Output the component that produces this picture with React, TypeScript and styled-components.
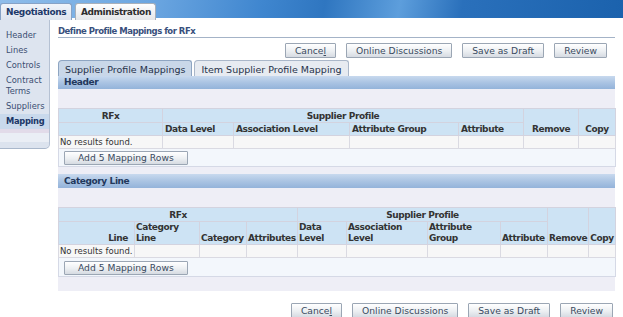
import React from 'react';
import styled, { createGlobalStyle, css } from 'styled-components';

const GlobalStyle = createGlobalStyle`
  html, body {
    margin: 0;
    padding: 0;
    background: #ffffff;
  }
  body {
    font-family: "DejaVu Sans", Verdana, sans-serif;
    font-size: 9px;
    color: #333333;
  }
`;

const Page = styled.div`
  width: 623px;
`;

const TopBar = styled.div`
  height: 20px;
  display: flex;
  align-items: flex-end;
  gap: 3px;
  background-color: #ffffff;
  background-image: linear-gradient(
    100deg,
    #8fbdea 0%,
    #6aa5e0 25%,
    #3f86cf 42%,
    #2f76c0 52%,
    #5d9edc 64%,
    #2a70bb 74%,
    #1b62ad 100%
  );
  background-size: 100% 18px;
  background-repeat: no-repeat;
`;

const TopTab = styled.div<{ $active?: boolean }>`
  box-sizing: border-box;
  height: 17px;
  padding: 2px 0 0 5px;
  border: 1px solid;
  border-bottom: none;
  border-radius: 3px 3px 0 0;
  font-weight: bold;
  letter-spacing: -0.4px;
  line-height: 13px;
  white-space: nowrap;
  ${({ $active }) =>
    $active
      ? css`
          width: 72px;
          color: #1e3a6a;
          border-color: #86a2c6;
          background: linear-gradient(#f0f4fa, #dde4ef);
        `
      : css`
          width: 81px;
          color: #2e2e2e;
          border-color: #a8b0ba;
          background: linear-gradient(#ffffff, #e4e6e9);
        `}
`;

const Layout = styled.div`
  display: flex;
  align-items: flex-start;
`;

const SideNav = styled.nav`
  box-sizing: border-box;
  width: 50px;
  flex: none;
  padding-top: 8px;
  background: #dde4ef;
  border-right: 1px solid #b5c1d3;
  border-bottom: 1px solid #a9b7cb;
  border-bottom-right-radius: 5px;
  font-size: 8.3px;
`;

const NavItem = styled.div<{ $selected?: boolean }>`
  padding: 2px 0 2px 6px;
  line-height: 11px;
  color: #3b4e72;
  ${({ $selected }) =>
    $selected &&
    css`
      font-weight: bold;
      letter-spacing: -0.3px;
      color: #1b3767;
      background: #c9d9ec;
    `}
`;

const NavFoot = styled.div`
  height: 19px;
  background: linear-gradient(
    #e2dbe9 0,
    #e2dbe9 4px,
    #eaeef5 4px,
    #eaeef5 13px,
    #dce3ee 13px
  );
  border-bottom-right-radius: 5px;
`;

const Main = styled.main`
  width: 557px;
  margin-left: 8px;
`;

const PageTitle = styled.h1`
  margin: 0;
  padding-top: 5px;
  line-height: 12px;
  font-size: 8.5px;
  font-weight: bold;
  letter-spacing: -0.5px;
  color: #384f7c;
  border-bottom: 1px solid #a4b3c7;
`;

const ButtonRow = styled.div<{ $mt: number; $pr: number }>`
  display: flex;
  justify-content: flex-end;
  gap: 10px;
  margin-top: ${({ $mt }) => $mt}px;
  padding-right: ${({ $pr }) => $pr}px;
`;

const Button = styled.button`
  box-sizing: border-box;
  height: 15px;
  padding: 0 9px;
  font-family: inherit;
  font-size: 9.2px;
  line-height: 13px;
  color: #3a4a60;
  background: linear-gradient(#ffffff, #eceff2 55%, #d6dbe2);
  border: 1px solid #9ba6b4;
  border-radius: 1px;
  white-space: nowrap;
`;

const SubTabs = styled.div`
  display: flex;
  gap: 2px;
  margin-top: 2px;
  height: 16px;
`;

const SubTab = styled.div<{ $active?: boolean }>`
  box-sizing: border-box;
  height: 16px;
  padding: 2px 6px 0;
  font-size: 9.5px;
  line-height: 13px;
  color: #26324a;
  border: 1px solid;
  border-bottom: none;
  border-radius: 4px 3px 0 0;
  white-space: nowrap;
  ${({ $active }) =>
    $active
      ? css`
          background: #c9d7e8;
          border-color: #8ea5c2;
        `
      : css`
          background: #e7ebf1;
          border-color: #aab7c9;
        `}
`;

const Panel = styled.section`
  background: #eeeef6;
  padding-bottom: 14px;
`;

const SectionBar = styled.div<{ $h: number }>`
  height: ${({ $h }) => $h}px;
  line-height: ${({ $h }) => $h}px;
  padding-left: 6px;
  font-weight: bold;
  letter-spacing: -0.4px;
  color: #22385c;
  background: linear-gradient(#c8d9ee, #abc4e3 50%, #93b3da);
`;

const TableWrap = styled.div<{ $mt: number }>`
  margin-top: ${({ $mt }) => $mt}px;
`;

const DataTable = styled.table`
  width: 100%;
  table-layout: fixed;
  border-collapse: collapse;
`;

const Col = styled.col<{ $w: number }>`
  width: ${({ $w }) => $w}px;
`;

const HeadRow = styled.tr<{ $h: number }>`
  height: ${({ $h }) => $h}px;
`;

const Th = styled.th<{ $align?: string; $pad?: number }>`
  padding: 0 ${({ $pad }) => $pad ?? 2}px;
  background: #cde3f4;
  border: 1px solid #d3d3df;
  font-weight: bold;
  letter-spacing: -0.4px;
  line-height: 11px;
  color: #333333;
  text-align: ${({ $align }) => $align ?? 'left'};
  vertical-align: bottom;
  white-space: nowrap;
  overflow: hidden;
`;

const DataRow = styled.tr`
  height: 13px;
`;

const Td = styled.td`
  padding: 0 1px;
  background: #f7f7f7;
  border: 1px solid #dadae2;
  font-size: 8.5px;
  line-height: 11px;
  white-space: nowrap;
  overflow: visible;
`;

const AddCell = styled.td<{ $h: number }>`
  height: ${({ $h }) => $h}px;
  box-sizing: border-box;
  padding: 1px 0 0 5px;
  background: #f3f7fc;
  border: 1px solid #d5d9e6;
  vertical-align: middle;
`;

const AddButton = styled(Button)`
  height: 14px;
  padding: 0 13px;
  line-height: 12px;
`;

const Underline = styled.span`
  text-decoration: underline;
`;

const navItems = ['Header', 'Lines', 'Controls', 'Contract Terms', 'Suppliers'];

const Actions = ({ mt, pr }: { mt: number; pr: number }) => (
  <ButtonRow $mt={mt} $pr={pr}>
    <Button>
      Cance<Underline>l</Underline>
    </Button>
    <Button>Online Discussions</Button>
    <Button>Save as Draft</Button>
    <Button>Review</Button>
  </ButtonRow>
);

const HeaderMappings = () => (
  <TableWrap $mt={19}>
    <DataTable>
      <colgroup>
        {[104, 71, 116, 109, 65, 55, 37].map((w, i) => (
          <Col key={i} $w={w} />
        ))}
      </colgroup>
      <thead>
        <HeadRow $h={14}>
          <Th $align="center">RFx</Th>
          <Th $align="center" colSpan={4}>
            Supplier Profile
          </Th>
          <Th $align="center" rowSpan={2}>
            Remove
          </Th>
          <Th $align="center" rowSpan={2}>
            Copy
          </Th>
        </HeadRow>
        <HeadRow $h={13}>
          <Th />
          <Th>Data Level</Th>
          <Th>Association Level</Th>
          <Th>Attribute Group</Th>
          <Th>Attribute</Th>
        </HeadRow>
      </thead>
      <tbody>
        <DataRow>
          <Td>No results found.</Td>
          {[0, 1, 2, 3, 4, 5].map((i) => (
            <Td key={i} />
          ))}
        </DataRow>
        <tr>
          <AddCell colSpan={7} $h={18}>
            <AddButton>Add 5 Mapping Rows</AddButton>
          </AddCell>
        </tr>
      </tbody>
    </DataTable>
  </TableWrap>
);

const CategoryMappings = () => (
  <TableWrap $mt={19}>
    <DataTable>
      <colgroup>
        {[76, 65, 47, 51, 49, 81, 73, 47, 41, 27].map((w, i) => (
          <Col key={i} $w={w} />
        ))}
      </colgroup>
      <thead>
        <HeadRow $h={14}>
          <Th $align="center" colSpan={4}>
            RFx
          </Th>
          <Th $align="center" colSpan={4}>
            Supplier Profile
          </Th>
          <Th $align="center" $pad={1} rowSpan={2}>
            Remove
          </Th>
          <Th $align="center" $pad={1} rowSpan={2}>
            Copy
          </Th>
        </HeadRow>
        <HeadRow $h={23}>
          <Th $align="right" $pad={6}>
            Line
          </Th>
          <Th $pad={1}>
            Category
            <br />
            Line
          </Th>
          <Th $pad={1}>Category</Th>
          <Th $pad={1}>Attributes</Th>
          <Th $pad={1}>
            Data
            <br />
            Level
          </Th>
          <Th $pad={1}>
            Association
            <br />
            Level
          </Th>
          <Th $pad={1}>
            Attribute
            <br />
            Group
          </Th>
          <Th $pad={1}>Attribute</Th>
        </HeadRow>
      </thead>
      <tbody>
        <DataRow>
          <Td>No results found.</Td>
          {[0, 1, 2, 3, 4, 5, 6, 7, 8].map((i) => (
            <Td key={i} />
          ))}
        </DataRow>
        <tr>
          <AddCell colSpan={10} $h={19}>
            <AddButton>Add 5 Mapping Rows</AddButton>
          </AddCell>
        </tr>
      </tbody>
    </DataTable>
  </TableWrap>
);

export default function App() {
  return (
    <Page>
      <GlobalStyle />
      <TopBar>
        <TopTab $active>Negotiations</TopTab>
        <TopTab>Administration</TopTab>
      </TopBar>
      <Layout>
        <SideNav>
          {navItems.map((item) => (
            <NavItem key={item}>{item}</NavItem>
          ))}
          <NavItem $selected>Mapping</NavItem>
          <NavFoot />
        </SideNav>
        <Main>
          <PageTitle>Define Profile Mappings for RFx</PageTitle>
          <Actions mt={5} pr={8} />
          <SubTabs>
            <SubTab $active>Supplier Profile Mappings</SubTab>
            <SubTab>Item Supplier Profile Mapping</SubTab>
          </SubTabs>
          <Panel>
            <SectionBar $h={13}>Header</SectionBar>
            <HeaderMappings />
            <TableWrap $mt={7}>
              <SectionBar $h={14}>Category Line</SectionBar>
            </TableWrap>
            <CategoryMappings />
          </Panel>
          <Actions mt={12} pr={2} />
        </Main>
      </Layout>
    </Page>
  );
}
